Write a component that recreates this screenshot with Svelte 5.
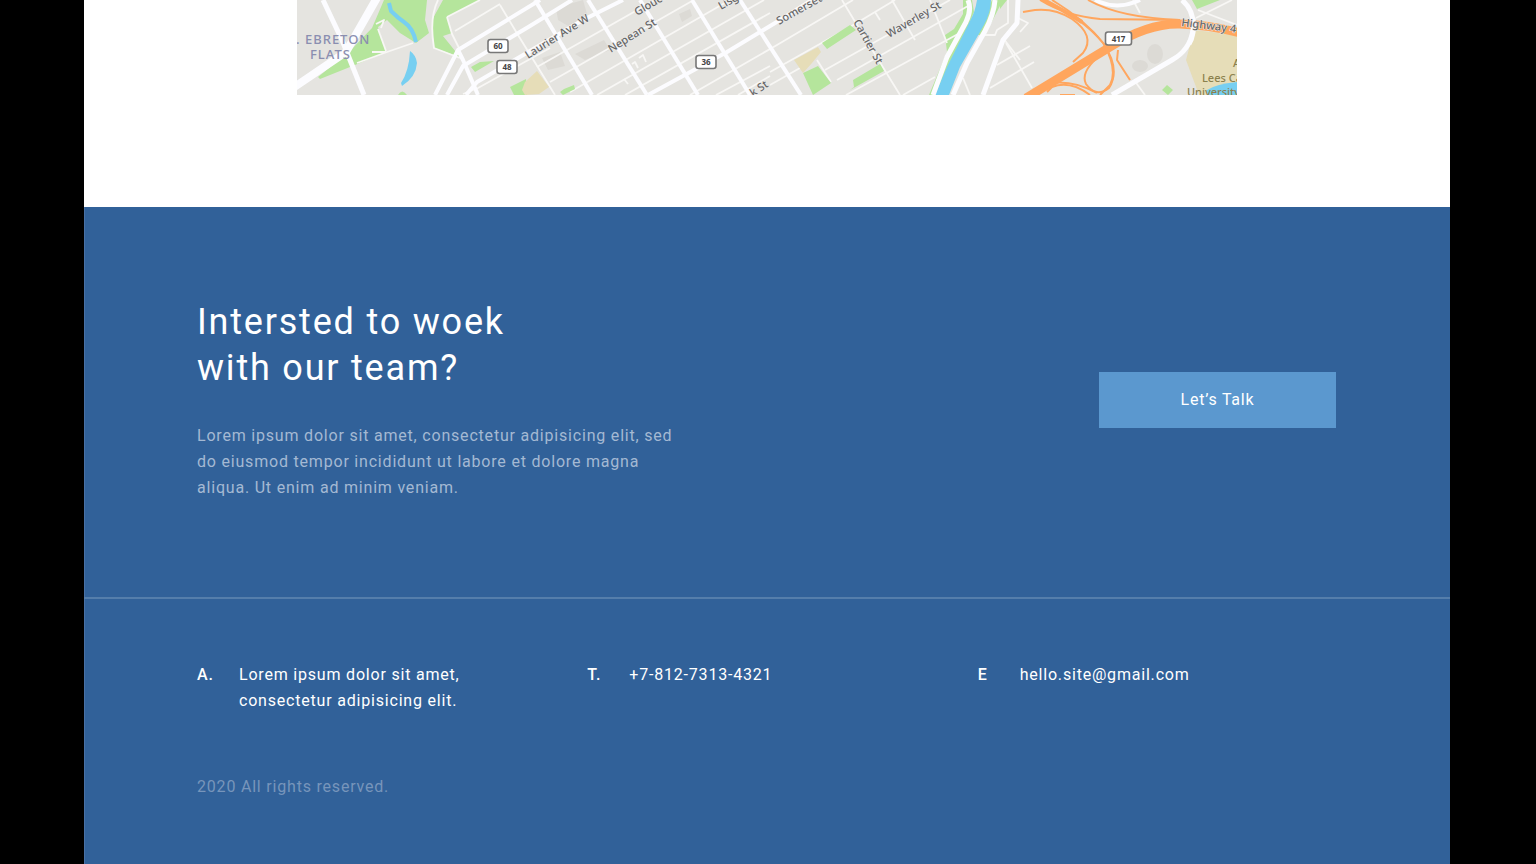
<script>
  const minorStreets = [
    'M357 63 387 52 413 43', 'M386 51 378 29', 'M447 17 452 34 460 50', 'M447 17 480 0', 'M455 31 500 4',
    'M500 5 518 35 555 95', 'M537 67 655 0', 'M550 82 692 1', 'M570 92 730 0', 'M597 95 764 0',
    'M625 95 770 13', 'M463 94 478 88 550 48', 'M690 95 777 45 853 0', 'M716 95 770 66', 'M738 95 770 76',
    'M770 72 850 27 895 0', 'M770 85 800 68', 'M825 70 950 0', 'M837 80 968 6', 'M846 95 958 34',
    'M903 95 935 77', 'M842 0 857 25 900 95', 'M892 0 915 40', 'M930 0 947 43', 'M817 60 831 82',
    'M875 12 880 20', 'M1008 0 1008 23 997 30 995 35 983 35', 'M1003 38 1020 60', 'M963 78 970 95',
    'M1006 43 1032 88', 'M997 65 1030 46', 'M990 88 1034 62', 'M1133 0 1140 13', 'M1196 18 1232 0',
    'M1198 10 1237 25', 'M1134 80 1145 95', 'M1018 18 1028 23 1020 32', 'M632 64 635 62 638 68 M639 58 643 55 646 62 M624 79 628 84'
  ];
  const avenues = [
    'M435 95 458 50 540 0', 'M447 95 463 66 530 26 572 0', 'M466 95 477 82 583 20 623 0',
    'M458 50 463 60 478 95', 'M535 0 592 95', 'M588 0 647 95', 'M640 0 698 95', 'M692 0 750 95',
    'M740 0 801 95', 'M648 95 727 52 780 20 812 0', 'M1095 0 Q1117 11 1140 0'
  ];
  const boulevards = [
    'M323 0 342 40 364 95', 'M968 0 Q972 10 966 22 L947 57 933 95', 'M995 0 Q994 14 985 31 L967 63 953 95',
    'M1018 0 1017 23 1003 40 983 95', 'M1182 0 Q1195 11 1193 30 Q1190 50 1172 60 L1112 95'
  ];
  const ramps = [
    'M1040 0 Q1066 16 1100 19 L1180 20', 'M1088 0 Q1120 18 1180 20', 'M1043 0 Q1083 18 1103 43 Q1121 69 1109 88 Q1096 98 1086 84 Q1079 70 1107 50',
    'M1023 12 1035 10 Q1055 8 1072 19 Q1096 36 1083 53 L1073 62', 'M1052 0 Q1085 20 1104 44 1118 70 1110 85 L1100 95',
    'M1118 50 1117 60 1130 80', 'M1047 92 1052 87 Q1070 80 1090 95', 'M1060 95 1075 95', 'M1050 83 Q1074 80 1097 93'
  ];
  const streetNames = [
    { name: 'Laurier Ave W', x: 528, y: 59, angle: -32 },
    { name: 'Nepean St', x: 611, y: 53, angle: -32 },
    { name: 'Gloucester St', x: 637, y: 16, angle: -30 },
    { name: 'Lisgar St', x: 721, y: 10, angle: -30 },
    { name: 'Somerset St', x: 779, y: 25, angle: -29 },
    { name: 'Waverley St', x: 889, y: 38, angle: -30 },
    { name: 'Cartier St', x: 853, y: 22, angle: 61 },
    { name: 'k St', x: 753, y: 97, angle: -34 }
  ];
  const shields = [
    { route: '60', x: 498, y: 46, w: 20 }, { route: '48', x: 507, y: 67, w: 20 },
    { route: '36', x: 706, y: 62, w: 20 }, { route: '417', x: 1118.5, y: 38.5, w: 26 }
  ];
  const contacts = [
    { label: 'A.', text: 'Lorem ipsum dolor sit amet, consectetur adipisicing elit.' },
    { label: 'T.', text: '+7-812-7313-4321', href: 'tel:+781273134321' },
    { label: 'E', text: 'hello.site@gmail.com', href: 'mailto:hello.site@gmail.com' }
  ];
</script>

<div class="page">
  <section class="location">
    <svg class="map" viewBox="297 0 940 95" role="img" aria-label="City map">
      <rect x="297" width="940" height="95" fill="#e5e4e0" />
      <g fill="#dcdad5">
        <path d="M556 8 583 0 587 14 575 30 558 20Z M575 54 604 40 610 50 585 60Z M679 14 690 9 692 16 682 22Z M542 58 560 52 565 66 548 70Z" />
        <ellipse cx="1155" cy="54" rx="8" ry="10" /><ellipse cx="1140" cy="66" rx="8" ry="6" />
      </g>
      <g fill="#b5e59c">
        <path d="M384 0H427L425 20 429 33 416 43 400 33 387 20 378 27 386 52 355 65 320 79 318 77 350 51 372 28Z" />
        <path d="M443 0H480L447 17 452 33 443 36 460 57 434 48 432 20Z" />
        <path d="M398 95Q402 88 407 95Z" />
        <path d="M963 0H972L974 12 941 95H929L947 52 945 35 954 29 963 14Z M992 0H1003L985 35H975Z M1192 0H1220L1197 9Z M1000 0H1007L1000 9Z M1162 90 1167 85 1173 90 1168 95Z" />
      </g>
      <path d="M1194 30 1237 35V95H1199L1186 60Z" fill="#e6ddb8" />
      <g fill="#77cff1">
        <path d="M410 51Q416 55 417 63 416 77 402 86L401 83Q409 71 410 51Z" />
        <path d="M1207 90Q1216 84 1237 82V95H1207Z" />
      </g>
      <path class="line" d="M389 3 391 11Q398 18 404 22 413 28 416 42" stroke="#77cff1" stroke-width="4" />
      <g class="line" stroke="#f8f7f5" stroke-width="1.8">
        {#each minorStreets as d}<path {d} />{/each}
        <path d="M438 0Q429 18 434 48L460 58M372 52 386 52M376 24 384 20 381 28" />
      </g>
      <path d="M822 43 850 25 856 30 827 49Z M803 73 818 66 831 83 813 95Z M850 90 854 87 853 80 880 64 884 71Z M471 67 480 62 494 61 475 72Z M510 87 526 79 527 95H514Z M560 92 564 89 574 85 575 89 563 95Z" fill="#b5e59c" />
      <path d="M794 60 818 47 821 52 812 63 803 73Z M525 82 537 71 549 87 539 94 525 95 522 90Z" fill="#e6ddb8" />
      <path d="M977 0H991Q991 12 984 25L960 67 949 95H935L947 67 971 19Q975 12 977 0Z" fill="#77cff1" />
      <g class="line" stroke="#fcfcff" stroke-width="4">
        {#each avenues as d}<path {d} />{/each}
      </g>
      <g class="line" stroke="#fcfcff" stroke-width="5">
        {#each boulevards as d}<path {d} />{/each}
      </g>
      <path class="line" d="M293 88 346 52 378-4" stroke="#fcfcff" stroke-width="8" />
      <g class="line" stroke="#ffa65e" stroke-width="2">
        {#each ramps as d}<path {d} />{/each}
        <path d="M1026 98 1110 47Q1148 23 1180 24 1210 25 1240 33" stroke-width="9" />
        <path d="M1038-3Q1060 8 1082 22" stroke-width="4" />
      </g>
      <path class="line" d="M1193 18Q1195 34 1189 44" stroke="#fcfcff" stroke-width="5" />
      <g class="district">
        <text x="296" y="44">. EBRETON</text>
        <text x="310" y="59">FLATS</text>
      </g>
      <g class="street">
        {#each streetNames as s}
          <text transform="translate({s.x} {s.y}) rotate({s.angle})">{s.name}</text>
        {/each}
        <text transform="translate(1181 26) rotate(7)">Highway 417</text>
      </g>
      <g class="campus">
        <text x="1233" y="67">A</text>
        <text x="1202" y="82">Lees Campus</text>
        <text x="1187" y="96">University</text>
      </g>
      {#each shields as s}
        <rect x={s.x - s.w / 2} y={s.y - 6.5} width={s.w} height="13" rx="2.5" fill="#fff" stroke="#777" stroke-width="1.6" />
        <text class="route" x={s.x} y={s.y + 3}>{s.route}</text>
      {/each}
    </svg>
  </section>

  <footer>
    <section class="cta">
      <div class="pitch">
        <h2>Intersted to woek<br />with our team?</h2>
        <p>Lorem ipsum dolor sit amet, consectetur adipisicing elit, sed do eiusmod tempor incididunt ut labore et dolore magna aliqua. Ut enim ad minim veniam.</p>
      </div>
      <button type="button">Let’s Talk</button>
    </section>
    <section class="details">
      <dl>
        {#each contacts as c}
          <div class="contact">
            <dt>{c.label}</dt>
            <dd>{#if c.href}<a href={c.href}>{c.text}</a>{:else}{c.text}{/if}</dd>
          </div>
        {/each}
      </dl>
      <p class="copyright">2020 All rights reserved.</p>
    </section>
  </footer>
</div>

<style>
  :global(body) {
    background: #000;
  }
  .page {
    display: flex;
    flex-direction: column;
    min-height: 100vh;
    margin: 0 86px 0 84px;
    background: #fff;
    font: 400 16px/26px Roboto, sans-serif;
    letter-spacing: 0.05em;
    color: #fff;
  }
  .location {
    padding: 0 16px 112px;
  }
  .map {
    display: block;
    width: 100%;
    max-width: 940px;
    margin: 0 auto;
    overflow: hidden;
    letter-spacing: 0;
    font-family: "Noto Sans", sans-serif;
  }
  .line {
    fill: none;
    stroke-linejoin: round;
  }
  .district {
    font-size: 13px;
    font-weight: 500;
    letter-spacing: 1px;
    fill: #8a8eb0;
  }
  .street {
    font-size: 11px;
    font-weight: 500;
    fill: #666;
    stroke: #eee;
    stroke-width: 1px;
    paint-order: stroke;
  }
  .campus {
    font-size: 11px;
    font-weight: 500;
    fill: #8b814d;
  }
  .route {
    font-size: 8px;
    font-weight: 700;
    text-anchor: middle;
    fill: #444;
  }
  footer {
    flex: 1;
    background: #316199;
    box-shadow: inset 1px 0 #4871a5;
  }
  .cta {
    display: flex;
    align-items: center;
    justify-content: space-between;
    gap: 32px;
    padding: 92px 114px 96px 113px;
  }
  .pitch {
    max-width: 480px;
  }
  h2 {
    margin: 0 0 32px;
    font-size: 36px;
    font-weight: 400;
    line-height: 46px;
    letter-spacing: 0.05em;
  }
  p {
    margin: 0;
  }
  .pitch p {
    color: #a4b9d3;
  }
  button {
    width: 237px;
    padding: 15px 16px;
    border: 0;
    background: #5b98cf;
    color: #fff;
    font: inherit;
    letter-spacing: 0.05em;
    cursor: pointer;
  }
  .details {
    padding: 63px 114px 64px 113px;
    border-top: 2px solid #557eab;
  }
  dl {
    display: grid;
    grid-template-columns: repeat(3, 1fr);
    gap: 32px;
    margin: 0 0 60px;
  }
  .contact {
    display: grid;
    grid-template-columns: 42px minmax(0, 240px);
  }
  dt {
    font-weight: 500;
  }
  dd {
    margin: 0;
  }
  a {
    color: inherit;
    text-decoration: none;
  }
  .copyright {
    color: #7795bb;
  }
</style>
